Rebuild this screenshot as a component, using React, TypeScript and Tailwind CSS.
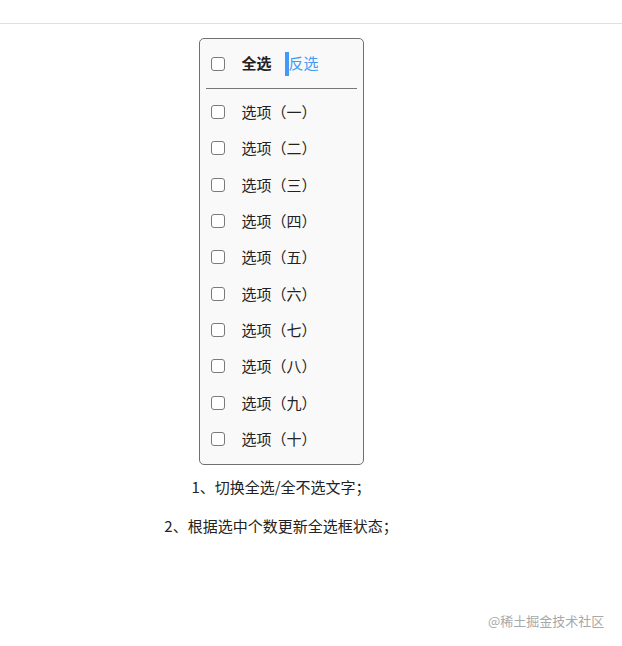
const items = ["一", "二", "三", "四", "五", "六", "七", "八", "九", "十"]

function Box() {
  return (
    <input
      type="checkbox"
      className="appearance-none w-[14px] h-[14px] m-0 border border-[#7a7a7a] rounded-[3px] bg-white shrink-0"
    />
  )
}

export default function App() {
  return (
    <div
      className="min-h-[646px] bg-white text-[15px] text-[#222] relative"
      style={{ fontFamily: '"Microsoft YaHei", "Noto Sans CJK SC", sans-serif' }}
    >
      <div className="h-[24px] border-b border-[#e0e0e0]" />
      <div className="w-[562px] flex flex-col items-center pt-[14px]">
        <div className="w-[165px] border border-[#707070] rounded-[5px] bg-[#f9f9f9] pb-[7px]">
          <div className="h-[49px] flex items-center px-[11px]">
            <Box />
            <span className="ml-[17px] font-bold">全选</span>
            <span className="ml-[13px] w-[4px] h-[24px] bg-[#3f9bf5]" />
            <span className="text-[#3f9bf5]">反选</span>
          </div>
          <div className="mx-[6px] border-t border-[#777]" />
          <div className="pt-[5px]">
            {items.map((n) => (
              <label key={n} className="h-[36.33px] flex items-center px-[11px]">
                <Box />
                <span className="ml-[17px]">选项（{n}）</span>
              </label>
            ))}
          </div>
        </div>
        <p className="mt-[12px] leading-[20px]">1、切换全选/全不选文字；</p>
        <p className="mt-[19px] leading-[20px]">2、根据选中个数更新全选框状态；</p>
      </div>
      <div className="absolute left-[488px] top-[611px] text-[13px] text-[#a8a8a8]">@稀土掘金技术社区</div>
    </div>
  )
}
